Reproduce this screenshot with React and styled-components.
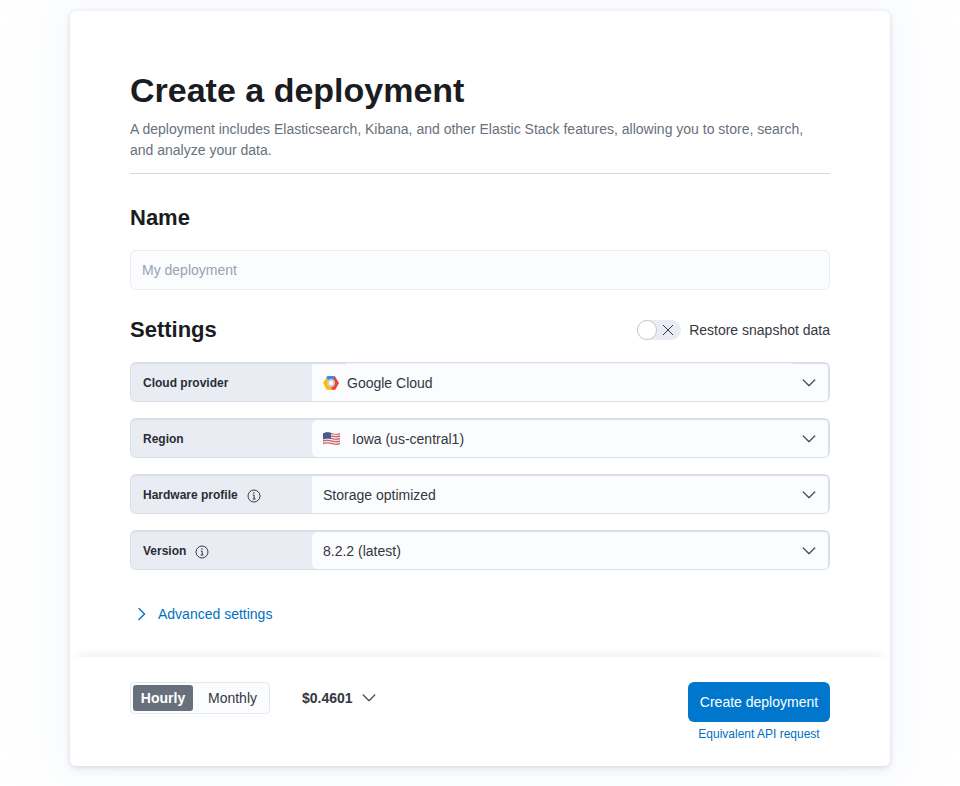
import React from "react";
import styled, { createGlobalStyle } from "styled-components";

const Global = createGlobalStyle`
  html, body { margin: 0; padding: 0; background: #fff; overflow: hidden; }
  body { font-family: "Liberation Sans", Arial, sans-serif; color: #343741; }
  * { box-sizing: border-box; }
`;

const Page = styled.div`
  width: 960px;
  height: 786px;
  padding-top: 11px;
  overflow: hidden;
`;

const Card = styled.main`
  width: 820px;
  height: 755px;
  margin: 0 auto;
  background: #fff;
  border-radius: 6px;
  display: flex;
  flex-direction: column;
  box-shadow:
    0 1px 4px rgba(60, 70, 100, 0.14),
    0 3.6px 10px rgba(60, 70, 100, 0.07),
    0 0 50px 20px rgba(225, 232, 245, 0.22);
`;

const Body = styled.div`
  flex: 1;
  padding: 59px 60px 0;
`;

const Title = styled.h1`
  margin: 0;
  font-size: 34px;
  line-height: 40px;
  font-weight: 700;
  color: #1a1c21;
`;

const Intro = styled.p`
  margin: 9px 0 0;
  font-size: 14px;
  line-height: 21px;
  color: #69707d;
`;

const Rule = styled.hr`
  border: 0;
  height: 1px;
  background: #d3dae6;
  margin: 12px 0 0;
`;

const SectionHead = styled.h2`
  margin: 0;
  font-size: 22px;
  line-height: 32px;
  font-weight: 700;
  color: #1a1c21;
`;

const NameHead = styled(SectionHead)`
  margin-top: 28px;
`;

const NameInput = styled.input`
  display: block;
  width: 100%;
  height: 40px;
  margin-top: 16px;
  padding: 0 11px;
  font: 14px "Liberation Sans", Arial, sans-serif;
  color: #343741;
  background: #fbfcfd;
  border: 1px solid #e8ebf2;
  border-radius: 6px;
  outline: none;
  &::placeholder { color: #98a2b3; opacity: 1; }
`;

const SettingsBar = styled.div`
  display: flex;
  align-items: center;
  justify-content: space-between;
  margin-top: 24px;
`;

const ToggleLabel = styled.label`
  display: flex;
  align-items: center;
  gap: 8px;
  font-size: 14px;
  line-height: 20px;
  color: #343741;
`;

const ToggleTrack = styled.span`
  position: relative;
  display: flex;
  align-items: center;
  justify-content: flex-end;
  width: 44px;
  height: 20px;
  padding-right: 5px;
  background: #e9edf3;
  border-radius: 10px;
  color: #343741;
`;

const ToggleThumb = styled.span`
  position: absolute;
  left: 0;
  top: 0;
  width: 20px;
  height: 20px;
  background: #fff;
  border: 1px solid #c2c7d1;
  border-radius: 50%;
`;

const Rows = styled.div`
  display: flex;
  flex-direction: column;
  gap: 16px;
  margin-top: 16px;
`;

const Row = styled.div`
  display: flex;
  height: 40px;
  background: #e9edf3;
  border: 1px solid #d8deea;
  border-top-width: 2px;
  border-right-width: 2px;
  border-radius: 6px;
`;

const RowLabel = styled.div`
  display: flex;
  align-items: center;
  gap: 9px;
  width: 181px;
  flex: none;
  padding-left: 12px;
  font-size: 12px;
  font-weight: 700;
  color: #2b2d35;
`;

const RowField = styled.div`
  position: relative;
  flex: 1;
  display: flex;
  align-items: center;
  padding: 0 11px 0 11px;
  font-size: 14px;
  color: #343741;
  background: #fbfcfd;
  border-radius: ${(p) => (p.$round ? "6px 4px 4px 6px" : "0 4px 4px 0")};
  ${(p) =>
    p.$seam &&
    `&::before {
      content: "";
      position: absolute;
      top: -1px;
      left: 34px;
      right: 35px;
      height: 1px;
      background: #f0f3f8;
    }`}
`;

const FieldIcon = styled.span`
  display: flex;
  align-items: center;
  flex: none;
  width: ${(p) => p.$w}px;
`;

const InfoMark = styled.span`
  display: flex;
  margin-top: 2px;
`;

const Chevron = styled.span`
  display: flex;
  margin-left: auto;
  color: #343741;
`;

const AdvancedLink = styled.a`
  display: flex;
  align-items: center;
  gap: 8px;
  margin-top: 34px;
  padding-left: 4px;
  font-size: 14px;
  line-height: 20px;
  color: #0071c2;
`;

const Footer = styled.footer`
  display: flex;
  justify-content: space-between;
  height: 109px;
  padding: 25px 60px 0;
  background: #fff;
  border-radius: 0 0 6px 6px;
  box-shadow: 0 -11px 7px -8px rgba(100, 110, 150, 0.1);
`;

const Pricing = styled.div`
  display: flex;
  align-items: flex-start;
  gap: 32px;
`;

const Segments = styled.div`
  display: flex;
  align-items: center;
  width: 140px;
  height: 32px;
  padding: 2px;
  background: #fbfcfd;
  border: 1px solid #e4e8f1;
  border-radius: 4px;
`;

const Segment = styled.span`
  display: flex;
  align-items: center;
  flex: ${(p) => (p.$on ? "0 0 60px" : "1")};
  justify-content: ${(p) => (p.$on ? "center" : "flex-start")};
  height: 26px;
  padding-left: ${(p) => (p.$on ? 0 : 15)}px;
  font-size: 14px;
  font-weight: ${(p) => (p.$on ? 700 : 400)};
  color: ${(p) => (p.$on ? "#fff" : "#343741")};
  background: ${(p) => (p.$on ? "#69707d" : "transparent")};
  border-radius: 3px;
`;

const Price = styled.div`
  display: flex;
  align-items: center;
  gap: 8px;
  height: 32px;
  font-size: 14px;
  font-weight: 700;
  color: #343741;
`;

const Actions = styled.div`
  display: flex;
  flex-direction: column;
  align-items: center;
  width: 142px;
`;

const PrimaryButton = styled.button`
  width: 142px;
  height: 40px;
  padding: 0;
  font: 14px "Liberation Sans", Arial, sans-serif;
  color: #fff;
  background: #0077cc;
  border: 0;
  border-radius: 6px;
`;

const ApiLink = styled.a`
  margin-top: 4px;
  font-size: 12px;
  line-height: 16px;
  color: #0071c2;
`;

const ChevronDown = ({ size = 16 }) => (
  <svg width={size} height={size} viewBox="0 0 16 16" fill="currentColor" aria-hidden="true">
    <path d="M1.96 4.65a.5.5 0 0 1 .7.01L8 10.04l5.34-5.38a.5.5 0 1 1 .71.7L8.35 11.1a.5.5 0 0 1-.7 0L1.95 5.36a.5.5 0 0 1 .01-.71z" stroke="currentColor" strokeWidth=".4" />
  </svg>
);

const ChevronRight = () => (
  <svg width="16" height="16" viewBox="0 0 16 16" fill="none" stroke="currentColor" strokeWidth="1.4" strokeLinecap="round" aria-hidden="true">
    <path d="M5 2.5 10.5 8 5 13.5" />
  </svg>
);

const CloseX = () => (
  <svg width="16" height="16" viewBox="0 0 16 16" fill="none" stroke="currentColor" strokeWidth="1" aria-hidden="true">
    <path d="M3 3l10 10M13 3L3 13" />
  </svg>
);

const InfoIcon = () => (
  <svg width="14" height="14" viewBox="0 0 14 14" fill="none" stroke="#343741" aria-hidden="true">
    <circle cx="7" cy="7" r="6" strokeWidth="1" />
    <path d="M5.8 6.2H7.2V10M5.6 10H8.6" strokeWidth="1" />
    <circle cx="6.9" cy="4" r=".8" fill="#343741" stroke="none" />
  </svg>
);

const GoogleCloudIcon = () => (
  <svg width="16" height="16" viewBox="0 0 16 16" aria-hidden="true">
    <polygon points="3.2,3 4.4,1 11.6,1 13.4,4 10.5,5.5 5.5,5.5" fill="#4285f4" />
    <polygon points="3.2,3 0,8 3.8,14.8 8.4,14.8 8.4,12 5.4,11 4,8 5.5,5.5" fill="#fbbc05" />
    <polygon points="11.6,1 16,8 12.2,14.8 8.4,14.8 8.4,12 10.6,11 12,8 10.5,5.5" fill="#ea4335" />
    <circle cx="8" cy="8" r="3.1" fill="#fff" stroke="#c9c9c9" strokeWidth="1.9" />
  </svg>
);

const FlagUS = () => (
  <svg width="17" height="14" viewBox="0 0 17 14" aria-hidden="true">
    <defs>
      <clipPath id="flag-wave">
        <path d="M0 1.5Q4 -.5 8.5 1T17 1V12.5Q13 13.5 8.5 12.5T0 13Z" />
      </clipPath>
    </defs>
    <g clipPath="url(#flag-wave)">
      <rect width="17" height="14" fill="#f3e6e8" />
      {[1.5, 4, 6.5, 9, 11.5].map((y) => (
        <path key={y} d={`M0 ${y}Q4 ${y - 1.5} 8.5 ${y}T17 ${y}`} fill="none" stroke="#c8505e" strokeWidth="1.2" />
      ))}
      <path d="M0 0H8V6.5Q4 6 0 7.5Z" fill="#47598f" />
    </g>
  </svg>
);

const rows = [
  { label: "Cloud provider", value: "Google Cloud", icon: <GoogleCloudIcon />, w: 24, seam: true },
  { label: "Region", value: "Iowa (us-central1)", icon: <FlagUS />, w: 29, round: true },
  { label: "Hardware profile", value: "Storage optimized", info: true },
  { label: "Version", value: "8.2.2 (latest)", info: true, round: true },
];

export default function App() {
  return (
    <Page>
      <Global />
      <Card>
        <Body>
          <Title>Create a deployment</Title>
          <Intro>
            A deployment includes Elasticsearch, Kibana, and other Elastic Stack features, allowing you to store, search,
            and analyze your data.
          </Intro>
          <Rule />
          <NameHead>Name</NameHead>
          <NameInput placeholder="My deployment" aria-label="Name" />
          <SettingsBar>
            <SectionHead>Settings</SectionHead>
            <ToggleLabel>
              <ToggleTrack>
                <ToggleThumb />
                <CloseX />
              </ToggleTrack>
              Restore snapshot data
            </ToggleLabel>
          </SettingsBar>
          <Rows>
            {rows.map((r) => (
              <Row key={r.label}>
                <RowLabel>
                  {r.label}
                  {r.info && (
                    <InfoMark>
                      <InfoIcon />
                    </InfoMark>
                  )}
                </RowLabel>
                <RowField $round={r.round} $seam={r.seam}>
                  {r.icon && <FieldIcon $w={r.w}>{r.icon}</FieldIcon>}
                  {r.value}
                  <Chevron>
                    <ChevronDown />
                  </Chevron>
                </RowField>
              </Row>
            ))}
          </Rows>
          <AdvancedLink>
            <ChevronRight />
            Advanced settings
          </AdvancedLink>
        </Body>
        <Footer>
          <Pricing>
            <Segments>
              <Segment $on>Hourly</Segment>
              <Segment>Monthly</Segment>
            </Segments>
            <Price>
              $0.4601
              <ChevronDown />
            </Price>
          </Pricing>
          <Actions>
            <PrimaryButton>Create deployment</PrimaryButton>
            <ApiLink>Equivalent API request</ApiLink>
          </Actions>
        </Footer>
      </Card>
    </Page>
  );
}
